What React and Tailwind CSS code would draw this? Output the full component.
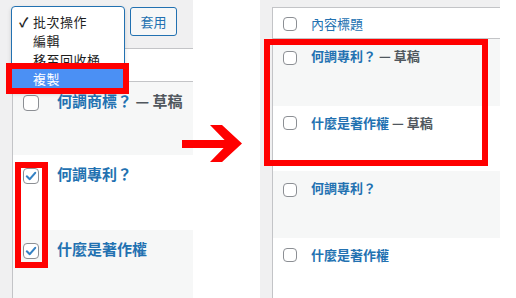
import React from 'react';

const FONT = { fontFamily: '"Noto Sans CJK TC", "Noto Sans", sans-serif' };

const Checkbox = ({ checked, size = 16 }) => (
    <span
        className="shrink-0 rounded-[4px] border border-[#8c8f94] bg-white flex items-center justify-center"
        style={{ width: size, height: size }}
    >
        {checked && (
            <svg viewBox="0 0 16 16" width={size - 2} height={size - 2}>
                <path d="M3.2 8.4 L6.6 11.6 L12.8 4.4" fill="none" stroke="#3582c4" strokeWidth="2.4" strokeLinecap="round" strokeLinejoin="round" />
            </svg>
        )}
    </span>
);

const LeftRow = ({ title, draft, checked, gray, className }) => (
    <div className={`flex items-start pl-[10px] ${gray ? 'bg-[#f6f7f7]' : 'bg-white'} ${className}`}>
        <span className="mt-[13px]"><Checkbox checked={checked} size={16} /></span>
        <span className="ml-[18px] mt-[8px] text-[15px] leading-[22px] font-semibold text-[#2271b1] whitespace-nowrap">
            {title}
            {draft && <span className="text-[#50575e]"> — 草稿</span>}
        </span>
    </div>
);

const RightRow = ({ title, draft, gray, className, cbTop = 'mt-[12px]' }) => (
    <div className={`flex items-start pl-[10px] ${gray ? 'bg-[#f6f7f7]' : 'bg-white'} ${className}`}>
        <span className={cbTop}><Checkbox size={14} /></span>
        <span className="ml-[14px] mt-[7px] text-[13px] leading-[20px] font-semibold text-[#2271b1] whitespace-nowrap">
            {title}
            {draft && <span className="text-[#50575e]"> — 草稿</span>}
        </span>
    </div>
);

const MenuItem = ({ label, checked, active, className = '' }) => (
    <div className={`h-[19px] flex items-center pl-[7px] text-[13px] leading-[19px] ${active ? 'bg-[#4b90f4] text-white' : 'text-[#1e1e1e]'} ${className}`}>
        <span className="w-[14px] font-bold">{checked ? '✓' : ''}</span>
        <span className="tracking-[0.5px]">{label}</span>
    </div>
);

const App = () => {
    return (
        <div className="w-[516px] h-[298px] bg-white relative overflow-hidden flex select-none" style={FONT}>
            {/* Before: bulk action */}
            <div className="w-[193px] h-full flex flex-col bg-[#f0f0f1]">
                <div className="h-[48px] shrink-0 flex items-start pt-[7px] pl-[11px]">
                    <div className="w-[114px] h-[29px] rounded-[4px] border border-[#2271b1] bg-white" />
                    <button className="ml-[5px] w-[47px] h-[29px] rounded-[3px] border border-[#2271b1] bg-[#f6f7f7] text-[13px] text-[#2271b1]">
                        套用
                    </button>
                </div>
                <div className="flex-1 flex">
                    <div className="w-[12px] shrink-0" />
                    <div className="flex-1 flex flex-col bg-white border-l border-t border-[#c3c4c7]">
                        {/* header row, hidden under the open menu */}
                        <div className="h-[33px] shrink-0 border-b border-[#c3c4c7]" />
                        <LeftRow className="h-[73px] shrink-0" gray title="何調商標？" draft />
                        <LeftRow className="h-[75px] shrink-0" checked title="何調專利？" />
                        <LeftRow className="flex-1" gray checked title="什麼是著作權" />
                    </div>
                </div>
            </div>

            {/* After: duplicated drafts */}
            <div className="ml-[67px] w-[240px] h-full flex flex-col bg-[#f0f0f1]">
                <div className="h-[7px] shrink-0" />
                <div className="flex-1 flex">
                    <div className="w-[12px] shrink-0" />
                    <div className="flex-1 flex flex-col bg-white border-l border-t border-[#c3c4c7]">
                        <div className="h-[31px] shrink-0 border-b border-[#c3c4c7] flex items-start pl-[10px]">
                            <span className="mt-[9px]"><Checkbox size={14} /></span>
                            <span className="ml-[14px] mt-[6px] text-[13px] leading-[20px] text-[#2271b1]">內容標題</span>
                        </div>
                        <RightRow className="h-[67px] shrink-0" gray title="何調專利？" draft />
                        <RightRow className="h-[65px] shrink-0" cbTop="mt-[10px]" title="什麼是著作權" draft />
                        <RightRow className="h-[67px] shrink-0" gray title="何調專利？" />
                        <RightRow className="flex-1" cbTop="mt-[10px]" title="什麼是著作權" />
                    </div>
                </div>
            </div>

            {/* Open select menu */}
            <div className="absolute left-[11px] top-[6px] w-[114px] rounded-[4px] border border-[#2271b1] bg-white pt-[5px] pb-[3px] shadow-[0_2px_4px_rgba(0,0,0,0.15)]">
                <MenuItem checked label="批次操作" />
                <MenuItem label="編輯" />
                <MenuItem label="移至回收桶" />
                <MenuItem active label="複製" />
            </div>

            {/* Annotations */}
            <div className="absolute left-[6px] top-[63px] w-[123px] h-[31px] border-[6px] border-[#ff0000]" />
            <div className="absolute left-[15px] top-[162px] w-[33px] h-[106px] border-[6px] border-[#ff0000]" />
            <div className="absolute left-[264px] top-[39px] w-[224px] h-[127px] border-[6px] border-[#ff0000]" />
            <svg className="absolute left-[182px] top-[122px]" width="62" height="44" viewBox="0 0 62 44">
                <rect x="0" y="18" width="48" height="8" fill="#ff0000" />
                <polygon points="28,3 40,3 60,21.5 40,40 28,40 46,21.5" fill="#ff0000" />
            </svg>
        </div>
    );
};

export default App;
